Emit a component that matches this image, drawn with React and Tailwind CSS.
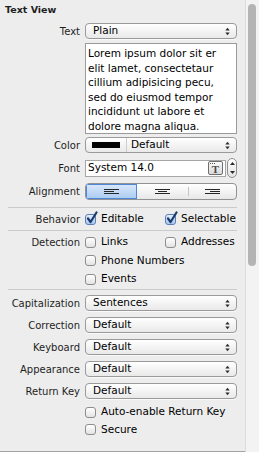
import React from "react";

function Arrows() {
  return (
    <svg width="5" height="9" viewBox="0 0 5 9" className="ml-auto mr-[6px] shrink-0">
      <path d="M0.3 3.6 L2.5 0.8 L4.7 3.6 Z" fill="#2b2b2b" />
      <path d="M0.3 5.4 L2.5 8.2 L4.7 5.4 Z" fill="#2b2b2b" />
    </svg>
  );
}

function Popup({ children }) {
  return (
    <div className="flex h-[16px] w-[152px] items-center overflow-hidden rounded-[4px] border border-[#9a9a9a] bg-gradient-to-b from-white to-[#e9e9e9] pl-[7px] text-[10.5px] text-black shadow-[0_1px_0_rgba(255,255,255,0.7)]">
      {children}
      <Arrows />
    </div>
  );
}

function Row({ label, children, className }) {
  return (
    <div className={"flex items-center " + (className || "")}>
      <div className="w-[80px] shrink-0 text-right text-[10px] text-[#1e1e1e]">{label}</div>
      <div className="ml-[5px] flex items-center">{children}</div>
    </div>
  );
}

function Check({ checked }) {
  if (checked) {
    return (
      <span className="relative block h-[11px] w-[11px] shrink-0 rounded-[3px] border border-[#5b7fb4] bg-gradient-to-b from-[#e4eefb] to-[#a9c8ee]">
        <svg width="13" height="14" viewBox="0 0 13 14" className="absolute left-[0px] top-[-4px]">
          <path d="M2 7.5 L4.6 11 L10.5 1.5" fill="none" stroke="#1c3a6e" strokeWidth="2.2" strokeLinecap="round" strokeLinejoin="round" />
        </svg>
      </span>
    );
  }
  return (
    <span className="block h-[11px] w-[11px] shrink-0 rounded-[3px] border border-[#8d8d8d] bg-gradient-to-b from-white to-[#e3e3e3]" />
  );
}

function CheckItem({ checked, label, className }) {
  return (
    <div className={"flex items-center " + (className || "")}>
      <Check checked={checked} />
      <span className="ml-[5px] whitespace-nowrap text-[10.5px] text-black">{label}</span>
    </div>
  );
}

function AlignIcon({ kind }) {
  const mid = kind === "left" ? "M0 2.5 H10" : kind === "center" ? "M3 2.5 H12" : "M5 2.5 H15";
  return (
    <svg width="15" height="5" viewBox="0 0 15 5">
      <path d={"M0 0.5 H15 " + mid + " M0 4.5 H15"} stroke="#262626" strokeWidth="1" />
    </svg>
  );
}

function Separator({ className }) {
  return <div className={"ml-[8px] h-px w-[229px] bg-[#cbcbcb] " + (className || "")} />;
}

const lorem = [
  "Lorem ipsum dolor sit er",
  "elit lamet, consectetaur",
  "cillium adipisicing pecu,",
  "sed do eiusmod tempor",
  "incididunt ut labore et",
  "dolore magna aliqua.",
];

export default function App() {
  return (
    <div className="flex h-[452px] w-[259px] bg-[#ededed] font-['DejaVu_Sans',sans-serif]">
      <div className="box-border flex h-[452px] w-[245px] flex-col border-b border-[#a2a2a2]">
        <div className="flex h-[20px] items-center pl-[5px] text-[9.5px] font-bold text-[#1e1e1e]">Text View</div>

        <Row label="Text" className="mt-[3px] h-[16px]">
          <Popup>Plain</Popup>
        </Row>

        <div className="ml-[85px] mt-[4px] box-border h-[91px] w-[152px] border border-[#9a9a9a] bg-white pl-[2px] pt-[2px] text-[10.5px] leading-[14.6px] text-black">
          {lorem.map((l) => (
            <div key={l} className="whitespace-nowrap">{l}</div>
          ))}
        </div>

        <Row label="Color" className="mt-[3px] h-[16px]">
          <div className="flex h-[16px] w-[152px] items-center overflow-hidden rounded-[4px] border border-[#9a9a9a] bg-gradient-to-b from-white to-[#e9e9e9] pl-[6px] text-[10.5px] text-black">
            <span className="block h-[6px] w-[28px] bg-black" />
            <span className="ml-[6px] block h-full w-px bg-[#cdcdcd]" />
            <span className="ml-[4px]">Default</span>
            <Arrows />
          </div>
        </Row>

        <Row label="Font" className="mt-[5px] h-[20px]">
          <div className="flex h-[17px] w-[141px] items-center border border-[#a6a6a6] bg-white pl-[2px] text-[10.5px] text-black">
            <span>System 14.0</span>
            <div className="relative ml-auto mr-[2px] flex h-[14px] w-[15px] items-center justify-center rounded-[2px] border border-[#6e6e6e] bg-gradient-to-b from-[#fafafa] to-[#d9d9d9]">
              <div className="absolute left-[1px] top-[1px] flex gap-[1px]">
                <span className="block h-px w-px bg-[#555]" />
                <span className="block h-px w-px bg-[#555]" />
                <span className="block h-px w-px bg-[#555]" />
              </div>
              <span className="mt-[2px] font-['Liberation_Serif',serif] text-[11px] font-bold leading-none text-[#4a4a4a]">T</span>
            </div>
          </div>
          <div className="ml-[1px] flex h-[20px] w-[10px] flex-col items-center justify-between rounded-[5px] border border-[#8f8f8f] bg-gradient-to-b from-white to-[#e4e4e4] py-[3px]">
            <svg width="5" height="3" viewBox="0 0 5 3"><path d="M0 3 L2.5 0 L5 3 Z" fill="#2b2b2b" /></svg>
            <svg width="5" height="3" viewBox="0 0 5 3"><path d="M0 0 L2.5 3 L5 0 Z" fill="#2b2b2b" /></svg>
          </div>
        </Row>

        <Row label="Alignment" className="mt-[5px] h-[17px]">
          <div className="flex h-[17px] w-[152px] overflow-hidden rounded-[4px] border border-[#929292] bg-gradient-to-b from-white to-[#e8e8e8]">
            <div className="flex h-full w-[51px] items-center justify-center bg-gradient-to-b from-[#dbe9fb] to-[#a9caf1] shadow-[inset_0_0_0_1px_#4f86d6]">
              <AlignIcon kind="left" />
            </div>
            <div className="flex h-full w-[51px] items-center justify-center">
              <AlignIcon kind="center" />
            </div>
            <div className="my-[3px] w-px bg-[#c4c4c4]" />
            <div className="flex h-full flex-1 items-center justify-center">
              <AlignIcon kind="right" />
            </div>
          </div>
        </Row>

        <Separator className="mt-[7px]" />

        <Row label="Behavior" className="mt-[4px] h-[14px]">
          <CheckItem checked label="Editable" className="w-[80px]" />
          <CheckItem checked label="Selectable" />
        </Row>

        <Separator className="mt-[4px]" />

        <Row label="Detection" className="mt-[2px] h-[18px]">
          <CheckItem label="Links" className="w-[80px]" />
          <CheckItem label="Addresses" />
        </Row>
        <Row label="" className="h-[19px]">
          <CheckItem label="Phone Numbers" />
        </Row>
        <Row label="" className="h-[18px]">
          <CheckItem label="Events" />
        </Row>

        <Separator className="mt-[1px]" />

        <Row label="Capitalization" className="mt-[5px] h-[16px]">
          <Popup>Sentences</Popup>
        </Row>
        <Row label="Correction" className="mt-[6px] h-[16px]">
          <Popup>Default</Popup>
        </Row>
        <Row label="Keyboard" className="mt-[6px] h-[16px]">
          <Popup>Default</Popup>
        </Row>
        <Row label="Appearance" className="mt-[6px] h-[16px]">
          <Popup>Default</Popup>
        </Row>
        <Row label="Return Key" className="mt-[6px] h-[16px]">
          <Popup>Default</Popup>
        </Row>
        <Row label="" className="mt-[4px] h-[18px]">
          <CheckItem label="Auto-enable Return Key" />
        </Row>
        <Row label="" className="h-[17px]">
          <CheckItem label="Secure" />
        </Row>
      </div>
      <div className="h-[452px] w-[14px] border-l border-[#dcdcdc] bg-[#f3f3f3]">
        <div className="ml-[2px] mt-[4px] h-[262px] w-[8px] rounded-full bg-[#b4b4b4]" />
      </div>
    </div>
  );
}
